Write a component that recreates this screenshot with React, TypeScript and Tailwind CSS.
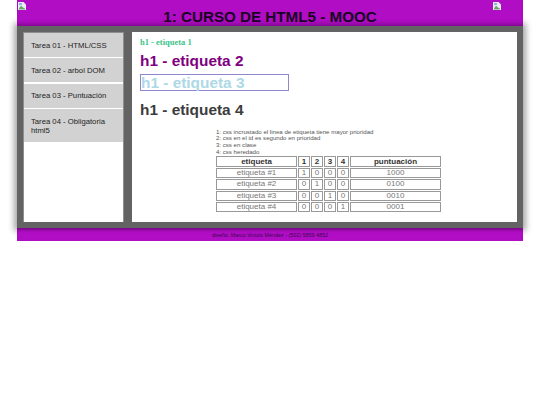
const tareas = ["Tarea 01 - HTML/CSS", "Tarea 02 - arbol DOM", "Tarea 03 - Puntuación", "Tarea 04 - Obligatoria html5"];

const filas = [
  { nombre: "etiqueta #1", valores: [1, 0, 0, 0], total: "1000" },
  { nombre: "etiqueta #2", valores: [0, 1, 0, 0], total: "0100" },
  { nombre: "etiqueta #3", valores: [0, 0, 1, 0], total: "0010" },
  { nombre: "etiqueta #4", valores: [0, 0, 0, 1], total: "0001" },
];

// broken image placeholder
const BrokenImage = () => (
  <svg width="8" height="8" viewBox="0 0 8 8" className="block">
    <path d="M0 0H5.5L8 2.5V8H0Z" fill="#e8eef8" />
    <path d="M1 6.5L3 3.5L5 5.5L7 6.5V7.5H1Z" fill="#6fa56a" />
    <rect x="1" y="1" width="3" height="2" fill="#8fb4e8" />
  </svg>
);

const Celda = ({ children, className = "" }: { children: React.ReactNode; className?: string }) => (
  <td className={`border border-[#999] p-0 text-center align-middle leading-none ${className}`}>{children}</td>
);

export default function App() {
  return (
    <div className="min-h-[405px] bg-white font-['Liberation_Sans',sans-serif]">
      <div className="mx-[17px] w-[506px]">
        <header className="relative z-10 h-[26px] bg-[#b10dc4] shadow-[inset_0_-4px_4px_-2px_rgba(60,0,70,0.45)]">
          <div className="flex justify-between pl-px pr-[22px] pt-[2px]">
            <BrokenImage />
            <BrokenImage />
          </div>
          <h1 className="-mt-[0.6px] text-center text-[15.2px] leading-[16px] font-bold text-[#17031f]">1: CURSO DE HTML5 - MOOC</h1>
        </header>

        <div className="flex h-[202px] gap-[8px] bg-[#636363] p-[6px] shadow-[0_0_6px_3px_rgba(0,0,0,0.35)]">
          <nav className="w-[101px] border border-b-0 border-[#8f8f8f] bg-white">
            {tareas.map((t) => (
              <div key={t} className="mb-[1.4px] bg-[#d2d2d2] px-[7px] py-[7.5px] text-[7.7px] leading-[9px] text-[#222]">
                {t}
              </div>
            ))}
          </nav>

          <main className="flex-1 bg-white pl-[8px] pt-[5px]">
            <h2 className="font-['Liberation_Serif',serif] text-[8.5px] leading-[11px] font-bold text-[#3cc48a]">h1 - etiqueta 1</h2>
            <h2 className="mt-[2px] text-[15.4px] leading-[21px] font-bold text-[#800080]">h1 - etiqueta 2</h2>
            <h2 className="mt-[3px] h-[17px] w-[149px] border border-[#8d87d0] text-[15.4px] leading-[15px] font-bold text-[#add8e6]">h1 - etiqueta 3</h2>
            <h2 className="mt-[8px] text-[15.4px] leading-[21px] font-bold text-[#3c3c3c]">h1 - etiqueta 4</h2>

            <div className="mt-[8.6px] ml-[76px] w-[227px]">
              <p className="text-[6.1px] leading-[6.7px] text-[#555]">
                1: css incrustado el linea de etiqueta tiene mayor prioridad<br />
                2: css en el id es segundo en prioridad<br />
                3: css en clase<br />
                4: css heredado
              </p>
              <table className="-ml-px w-[227px] table-fixed border-separate border-spacing-x-[1px] border-spacing-y-[1px] text-[8px] text-[#777]">
                <thead>
                  <tr className="h-[10.4px] font-bold text-[#333]">
                    <Celda className="w-[81px]">etiqueta</Celda>
                    {[1, 2, 3, 4].map((n) => (
                      <Celda key={n} className="w-[12px]">{n}</Celda>
                    ))}
                    <Celda>puntuación</Celda>
                  </tr>
                </thead>
                <tbody>
                  {filas.map((f) => (
                    <tr key={f.nombre} className="h-[10.4px]">
                      <Celda>{f.nombre}</Celda>
                      {f.valores.map((v, i) => (
                        <Celda key={i}>{v}</Celda>
                      ))}
                      <Celda>{f.total}</Celda>
                    </tr>
                  ))}
                </tbody>
              </table>
            </div>
          </main>
        </div>

        <footer className="relative z-10 h-[13px] bg-[#b10dc4] text-center text-[5.4px] leading-[14px] text-[#3a0a50] shadow-[inset_0_3px_3px_-1px_rgba(60,0,70,0.5)]">
          diseño: Marco Vinicio Méndez - (502) 5859 4852
        </footer>
      </div>
    </div>
  );
}
